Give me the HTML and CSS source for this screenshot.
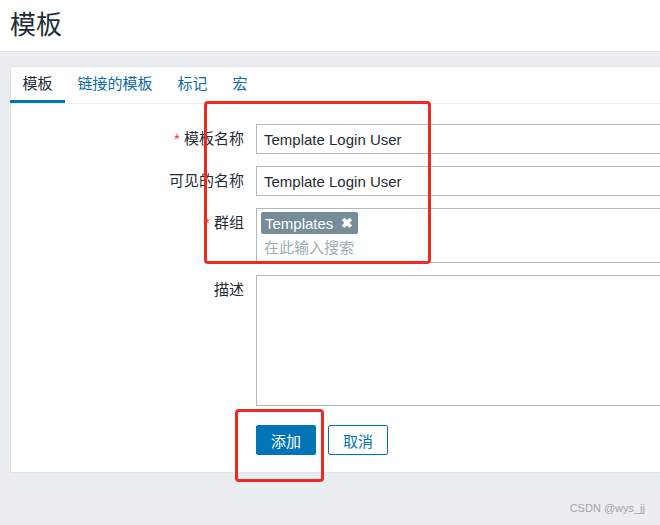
FILE: index.html
```html
<!DOCTYPE HTML>
<html>
<head>
  <title>模板</title>
  <meta name="viewport" content="width=device-width, initial-scale=1">
  <link rel="stylesheet" href="styles.css">
</head>
<body>
  <div class="header">
    <h1>模板</h1>
  </div>
  <div class="content">
    <div class="card">
      <ul class="tabs">
        <li class="tab active">模板</li>
        <li class="tab">链接的模板</li>
        <li class="tab">标记</li>
        <li class="tab">宏</li>
      </ul>
      <form class="form">
        <div class="row">
          <label class="label"><span class="req">*</span> 模板名称</label>
          <input class="field" type="text" value="Template Login User">
        </div>
        <div class="row">
          <label class="label">可见的名称</label>
          <input class="field" type="text" value="Template Login User">
        </div>
        <div class="row">
          <label class="label"><span class="req">*</span> 群组</label>
          <div class="field multiselect">
            <span class="tag">Templates <span class="tag-x">&#10006;</span></span>
            <span class="placeholder">在此输入搜索</span>
          </div>
        </div>
        <div class="row">
          <label class="label">描述</label>
          <textarea class="field area"></textarea>
        </div>
        <div class="row buttons">
          <span class="label"></span>
          <button type="button" class="btn primary">添加</button>
          <button type="button" class="btn alt">取消</button>
        </div>
      </form>
    </div>
  </div>
  <div class="mark mark-fields"></div>
  <div class="mark mark-add"></div>
  <div class="watermark">CSDN @wys_jj</div>
</body>
</html>
```

FILE: styles.css
```css
html {
  font-family: "Liberation Sans", "Noto Sans CJK SC", Arial, sans-serif;
  font-size: 15px;
  color: #1f2c33;
}
body {
  margin: 0;
  background-color: #ebeef0;
  overflow: hidden;
  height: 525px;
  position: relative;
}
.header {
  background-color: #fff;
  height: 51px;
  border-bottom: 1px solid #dfe4e7;
  padding-left: 10px;
}
h1 {
  margin: 0;
  font-size: 26px;
  font-weight: normal;
  line-height: 50px;
}
.content {
  padding: 14px 0 0 10px;
}
.card {
  background-color: #fff;
  border: 1px solid #dfe4e7;
  border-right: none;
  padding-bottom: 17px;
}
.tabs {
  list-style: none;
  margin: 0;
  padding: 0;
  display: flex;
  border-bottom: 1px solid #ebeef0;
}
.tab {
  padding: 0 12.5px;
  line-height: 33px;
  border-bottom: 3px solid transparent;
  color: #0a6ba8;
}
.tab:first-child {
  margin-left: -1px;
}
.tab.active {
  color: #1f2c33;
  border-bottom-color: #0275b8;
}
.form {
  padding-top: 20px;
  display: flex;
  flex-direction: column;
  gap: 12px;
}
.row {
  display: flex;
  align-items: flex-start;
  gap: 12px;
}
.label {
  width: 233px;
  flex-shrink: 0;
  text-align: right;
  line-height: 30px;
}
.req {
  color: #e33734;
}
.field {
  box-sizing: border-box;
  flex: 1;
  min-width: 0;
  height: 30px;
  border: 1px solid #acbbc2;
  border-right: none;
  padding: 0 7px;
  font: inherit;
  color: #1f2c33;
  background: #fff;
  outline: none;
}
.area {
  height: 131px;
  resize: none;
}
.multiselect {
  height: 55px;
  padding: 3px 4px;
}
.tag {
  display: inline-flex;
  align-items: center;
  gap: 8px;
  height: 22px;
  padding: 0 5px 0 4px;
  background-color: #768d99;
  color: #fff;
  border-radius: 2px;
}
.tag-x {
  font-size: 14px;
  font-weight: bold;
}
.placeholder {
  display: block;
  color: #a1aeb5;
  line-height: 27px;
  padding-left: 3px;
}
.buttons {
  padding-top: 7px;
}
.btn {
  box-sizing: border-box;
  width: 60px;
  height: 30px;
  border-radius: 2px;
  font: inherit;
  border: 1px solid #0275b8;
}
.primary {
  background-color: #0275b8;
  color: #fff;
}
.alt {
  background-color: #fff;
  color: #0275b8;
}
.mark {
  position: absolute;
  border: 3px solid #ec2a22;
  border-radius: 4px;
}
.mark-fields {
  left: 204px;
  top: 101px;
  width: 221px;
  height: 157px;
}
.mark-add {
  left: 235px;
  top: 409px;
  width: 83px;
  height: 67px;
}
.watermark {
  position: absolute;
  right: 15px;
  top: 502px;
  font-size: 11px;
  color: #a0a4a8;
}
```
